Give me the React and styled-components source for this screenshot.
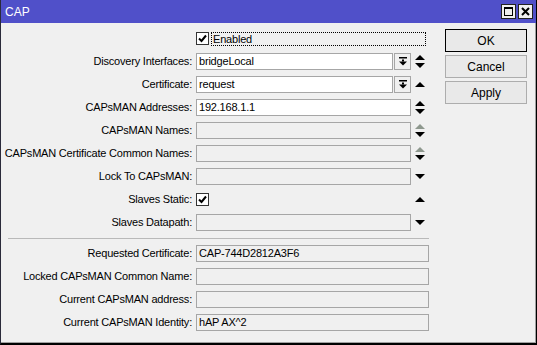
import React from "react";
import styled, { createGlobalStyle } from "styled-components";

const GlobalStyle = createGlobalStyle`
  html, body { margin: 0; padding: 0; background: #f0f0f0; }
  body { font-family: "Liberation Sans", Arial, sans-serif; }
  * { box-sizing: border-box; }
`;

const Window = styled.div`
  width: 537px;
  height: 345px;
  display: flex;
  flex-direction: column;
  border-left: 1px solid #2a2a3a;
  border-right: 1px solid #000;
  border-bottom: 2px solid #000;
  background: #f0f0f0;
  font-size: 11px;
  letter-spacing: -0.2px;
  color: #000;
`;

const TitleBar = styled.div`
  height: 23px;
  flex: none;
  background: #5050c9;
  display: flex;
  align-items: center;
  justify-content: space-between;
  padding: 0 3px 0 4px;
`;

const TitleText = styled.span`
  color: #fff;
  font-size: 12px;
  letter-spacing: 0;
`;

const TitleButtons = styled.div`
  display: flex;
  gap: 2px;
`;

const TitleButton = styled.div`
  width: 15px;
  height: 15px;
  border: 1px solid #222;
  background: #f0f0f0;
  display: flex;
  align-items: center;
  justify-content: center;
`;

const Body = styled.div`
  flex: 1;
  display: flex;
  align-items: flex-start;
  padding: 0 0 0 3px;
  border-right: 1px solid #a0a0a0;
  border-bottom: 1px solid #a0a0a0;
`;

const Form = styled.div`
  display: grid;
  grid-template-columns: 188px 233px;
  column-gap: 4px;
  row-gap: 6px;
  padding-top: 7px;
`;

const Label = styled.div`
  height: 17px;
  line-height: 17px;
  text-align: right;
  white-space: nowrap;
  justify-self: end;
`;

const Field = styled.div`
  height: 17px;
  display: flex;
  align-items: center;
`;

const Main = styled.div`
  width: 215px;
  height: 17px;
  display: flex;
  align-items: center;
  gap: 1px;
`;

const TextBox = styled.div`
  height: 17px;
  width: ${(p) => p.$w}px;
  flex: none;
  border: 1px solid #a6a6a6;
  background: ${(p) => (p.$disabled ? "#f0f0f0" : "#ffffff")};
  padding: 0 2px;
  line-height: 15px;
  white-space: nowrap;
  overflow: hidden;
`;

const DropButton = styled.div`
  width: 17px;
  height: 17px;
  flex: none;
  border: 1px solid #a6a6a6;
  background: #f0f0f0;
  display: flex;
  align-items: center;
  justify-content: center;
`;

const ArrowSlot = styled.div`
  width: 18px;
  height: 17px;
  flex: none;
  display: flex;
  align-items: center;
  justify-content: center;
`;

const Check = styled.div`
  width: 13px;
  height: 13px;
  flex: none;
  border: 1px solid #333;
  background: #fff;
  display: flex;
  align-items: center;
  justify-content: center;
`;

const FocusLabel = styled.div`
  margin-left: 2px;
  width: 215px;
  height: 14px;
  line-height: 12px;
  border: 1px dotted #000;
  padding-left: 1px;
`;

const Separator = styled.div`
  grid-column: 1 / -1;
  height: 1px;
  margin: 1px 0 0 4px;
  background: #b9b9b9;
`;

const ButtonCol = styled.div`
  margin-left: 16px;
  padding-top: 6px;
  display: flex;
  flex-direction: column;
  gap: 3px;
`;

const Button = styled.div`
  width: 82px;
  height: 23px;
  border: 1px solid ${(p) => (p.$primary ? "#000" : "#adadad")};
  background: #e9e9e9;
  display: flex;
  align-items: center;
  justify-content: center;
  font-size: 12px;
  letter-spacing: 0;
`;

const CheckMark = () => (
  <svg width="9" height="9" viewBox="0 0 9 9">
    <path d="M1 4.5 L3.5 7 L8 1.5" stroke="#000" strokeWidth="2" fill="none" />
  </svg>
);

const DropIcon = () => (
  <svg width="8" height="9" viewBox="0 0 8 9">
    <rect x="0" y="0" width="8" height="1.5" fill="#000" />
    <rect x="3" y="2.5" width="2" height="2" fill="#000" />
    <polygon points="0,4.5 8,4.5 4,8.5" fill="#000" />
  </svg>
);

const Arrows = ({ kind }) => {
  const up = kind === "both" || kind === "dim" || kind === "up";
  const down = kind === "both" || kind === "dim" || kind === "down";
  const upColor = kind === "dim" ? "#8e988e" : "#000";
  if (up && down) {
    return (
      <svg width="10" height="13" viewBox="0 0 10 13">
        <polygon points="5,0 10,5 0,5" fill={upColor} />
        <polygon points="0,8 10,8 5,13" fill="#000" />
      </svg>
    );
  }
  if (up) {
    return (
      <svg width="10" height="5" viewBox="0 0 10 5">
        <polygon points="5,0 10,5 0,5" fill="#000" />
      </svg>
    );
  }
  return (
    <svg width="10" height="5" viewBox="0 0 10 5">
      <polygon points="0,0 10,0 5,5" fill="#000" />
    </svg>
  );
};

const upper = [
  { label: "Discovery Interfaces:", value: "bridgeLocal", drop: true, arrows: "both" },
  { label: "Certificate:", value: "request", drop: true, arrows: "up" },
  { label: "CAPsMAN Addresses:", value: "192.168.1.1", arrows: "both" },
  { label: "CAPsMAN Names:", disabled: true, arrows: "dim" },
  { label: "CAPsMAN Certificate Common Names:", disabled: true, arrows: "dim" },
  { label: "Lock To CAPsMAN:", disabled: true, arrows: "down" },
  { label: "Slaves Static:", checkbox: true, arrows: "up" },
  { label: "Slaves Datapath:", disabled: true, arrows: "down" },
];

const lower = [
  { label: "Requested Certificate:", value: "CAP-744D2812A3F6" },
  { label: "Locked CAPsMAN Common Name:", value: "" },
  { label: "Current CAPsMAN address:", value: "" },
  { label: "Current CAPsMAN Identity:", value: "hAP AX^2" },
];

export default function App() {
  return (
    <>
      <GlobalStyle />
      <Window>
        <TitleBar>
          <TitleText>CAP</TitleText>
          <TitleButtons>
            <TitleButton>
              <svg width="9" height="9" viewBox="0 0 9 9">
                <rect x="0.5" y="0.5" width="8" height="8" fill="none" stroke="#000" />
                <rect x="0" y="0" width="9" height="2" fill="#000" />
              </svg>
            </TitleButton>
            <TitleButton>
              <svg width="9" height="9" viewBox="0 0 9 9">
                <path d="M1 1 L8 8 M8 1 L1 8" stroke="#000" strokeWidth="2" />
              </svg>
            </TitleButton>
          </TitleButtons>
        </TitleBar>
        <Body>
          <Form>
            <div />
            <Field>
              <Check>
                <CheckMark />
              </Check>
              <FocusLabel>Enabled</FocusLabel>
            </Field>
            {upper.map((r) => (
              <React.Fragment key={r.label}>
                <Label>{r.label}</Label>
                <Field>
                  <Main>
                    {r.checkbox ? (
                      <Check>
                        <CheckMark />
                      </Check>
                    ) : (
                      <>
                        <TextBox $w={r.drop ? 197 : 215} $disabled={r.disabled}>
                          {r.value}
                        </TextBox>
                        {r.drop && (
                          <DropButton>
                            <DropIcon />
                          </DropButton>
                        )}
                      </>
                    )}
                  </Main>
                  <ArrowSlot>
                    <Arrows kind={r.arrows} />
                  </ArrowSlot>
                </Field>
              </React.Fragment>
            ))}
            <Separator />
            {lower.map((r) => (
              <React.Fragment key={r.label}>
                <Label>{r.label}</Label>
                <Field>
                  <TextBox $w={233} $disabled>
                    {r.value}
                  </TextBox>
                </Field>
              </React.Fragment>
            ))}
          </Form>
          <ButtonCol>
            <Button $primary>OK</Button>
            <Button>Cancel</Button>
            <Button>Apply</Button>
          </ButtonCol>
        </Body>
      </Window>
    </>
  );
}
